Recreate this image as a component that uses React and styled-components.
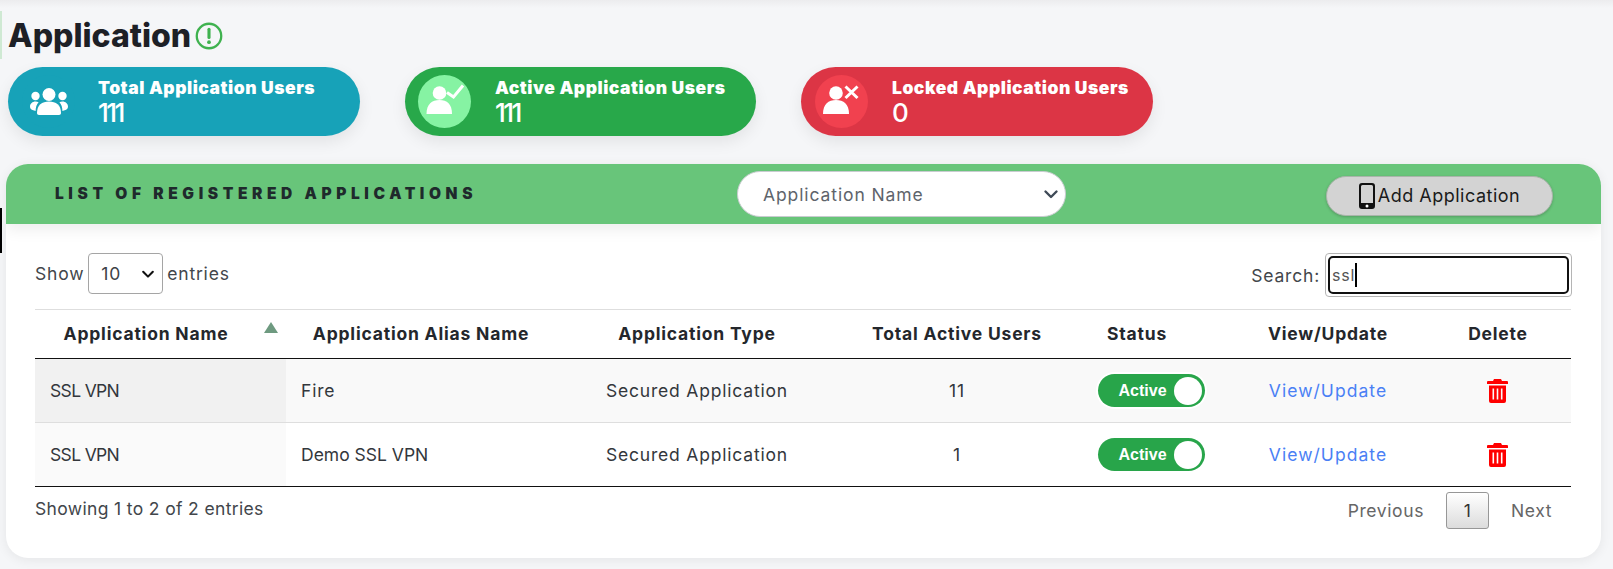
import React from "react";
import styled, { createGlobalStyle } from "styled-components";

const Global = createGlobalStyle`
  html, body { margin: 0; padding: 0; }
  body {
    background: #f5f6f8;
    font-family: "Inter", "Noto Sans", sans-serif;
    color: #212529;
  }
`;

const Page = styled.div`
  position: relative;
  width: 1613px;
  height: 569px;
  overflow: hidden;
  padding: 20px 12px 0 6px;
  box-sizing: border-box;
  background: linear-gradient(#ececee 0, #f5f6f8 8px);
  letter-spacing: 0.8px;
`;

const EdgeMark = styled.div`
  position: absolute;
  left: 0;
  width: 2px;
  top: ${(p) => p.$top}px;
  height: ${(p) => p.$h}px;
  background: ${(p) => p.$c};
`;

const TitleRow = styled.div`
  display: flex;
  align-items: center;
  gap: 4px;
  height: 32px;
  padding-left: 2px;
`;

const Title = styled.h1`
  margin: 0;
  font-size: 32px;
  line-height: 32px;
  font-weight: 800;
  color: #1d2026;
  letter-spacing: 0;
`;

const Stats = styled.div`
  display: flex;
  margin: 15px 0 0 2px;
  gap: 45px;
`;

const Pill = styled.div`
  width: ${(p) => p.$w}px;
  height: 69px;
  border-radius: 35px;
  background: ${(p) => p.$bg};
  box-shadow: 0 6px 16px rgba(0, 0, 0, 0.08);
  display: flex;
  align-items: center;
  color: #fff;
  padding-left: ${(p) => p.$pad}px;
  box-sizing: border-box;
`;

const PillIcon = styled.div`
  width: 53px;
  height: 53px;
  border-radius: 50%;
  background: ${(p) => p.$bg};
  display: flex;
  align-items: center;
  justify-content: center;
  flex: none;
`;

const PillText = styled.div`
  margin-left: ${(p) => p.$gap}px;
  display: flex;
  flex-direction: column;
`;

const PillLabel = styled.div`
  font-size: 17.5px;
  line-height: 22px;
  font-weight: 900;
  letter-spacing: 0.52px;
  white-space: nowrap;
`;

const PillValue = styled.div`
  font-size: 26px;
  line-height: 27px;
  font-weight: 500;
  letter-spacing: -2.5px;
`;

const Card = styled.section`
  margin-top: 28px;
  width: 1595px;
  height: 394px;
  background: #fff;
  border-radius: 22px;
  box-shadow: 0 2px 12px rgba(0, 0, 0, 0.07);
  overflow: hidden;
`;

const CardHeader = styled.header`
  height: 60px;
  background: #68c57a;
  display: flex;
  align-items: center;
  box-shadow: 0 6px 14px rgba(0, 0, 0, 0.07);
  position: relative;
`;

const CardTitle = styled.h2`
  margin: 0 0 1px 49px;
  width: 682px;
  flex: none;
  font-size: 15.5px;
  font-weight: 900;
  letter-spacing: 4.6px;
  color: #1f2a2c;
  white-space: nowrap;
`;

const NameSelect = styled.div`
  width: 329px;
  height: 46px;
  box-sizing: border-box;
  background: #fff;
  border: 1px solid #c9ccd0;
  border-radius: 23px;
  display: flex;
  align-items: center;
  justify-content: space-between;
  padding: 0 6px 0 25px;
  color: #5e646b;
  font-size: 17.5px;
  letter-spacing: 0.9px;
`;

const AddButton = styled.button`
  margin: 3px 0 0 260px;
  width: 227px;
  height: 40px;
  border-radius: 20px;
  border: 1px solid #a9b5aa;
  background: #d3d3d3;
  box-shadow: 0 1px 3px rgba(0, 0, 0, 0.2);
  display: flex;
  align-items: center;
  justify-content: center;
  gap: 3px;
  font: 400 18px "Inter", sans-serif;
  letter-spacing: 0.5px;
  color: #1a1a1a;
  padding: 0;
`;

const CardBody = styled.div`
  padding: 29px 29px 0 29px;
`;

const Controls = styled.div`
  display: flex;
  justify-content: space-between;
  align-items: flex-start;
  height: 44px;
  font-size: 17.5px;
  color: #42464b;
`;

const ControlGroup = styled.div`
  display: flex;
  align-items: center;
  gap: ${(p) => p.$gap}px;
`;

const EntrySelect = styled.div`
  width: 75px;
  height: 41px;
  box-sizing: border-box;
  border: 1px solid #a5a5a5;
  border-radius: 4px;
  display: flex;
  align-items: center;
  justify-content: space-between;
  padding: 0 7px 0 12px;
  color: #3d4146;
`;

const SearchBox = styled.div`
  width: 247px;
  height: 44px;
  box-sizing: border-box;
  border: 1px solid #b5b5b5;
  border-radius: 4px;
  padding: 2px;
`;

const SearchFocus = styled.div`
  height: 100%;
  box-sizing: border-box;
  border: 2.5px solid #111;
  border-radius: 5px;
  display: flex;
  align-items: center;
  padding-left: 2px;
  font-size: 16px;
  color: #555;
`;

const Caret = styled.span`
  display: inline-block;
  width: 2px;
  height: 24px;
  background: #000;
`;

const Table = styled.table`
  width: 1536px;
  margin-top: 12px;
  table-layout: fixed;
  border-collapse: collapse;
  border-top: 1px solid #dedede;
  border-bottom: 1.5px solid #111;
`;

const Th = styled.th`
  position: relative;
  height: 46px;
  padding: 0 ${(p) => p.$pr || 0}px 2px 0;
  text-align: center;
  font-size: 17.5px;
  font-weight: 700;
  color: #24272c;
  border-bottom: 1.5px solid #111;
  white-space: nowrap;
`;

const SortArrow = styled.span`
  position: absolute;
  left: 229px;
  top: 12px;
  width: 0;
  height: 0;
  border-left: 7.5px solid transparent;
  border-right: 7.5px solid transparent;
  border-top: 0;
  border-bottom: 11px solid #6e9a80;
`;

const Row = styled.tr`
  height: 64px;
  background: ${(p) => (p.$odd ? "#f9f9f9" : "#fff")};
  td {
    border-bottom: ${(p) => (p.$odd ? "1px solid #dedede" : "0")};
  }
`;

const Td = styled.td`
  padding: 0 ${(p) => p.$pr || 0}px 0 ${(p) => (p.$align === "center" ? 0 : 15)}px;
  text-align: ${(p) => p.$align || "left"};
  font-size: 17.5px;
  letter-spacing: ${(p) => (p.$ls !== undefined ? p.$ls : 0.8)}px;
  color: #33373c;
  background: ${(p) => p.$bg || "transparent"};
`;

const Toggle = styled.div`
  display: inline-flex;
  align-items: center;
  vertical-align: middle;
  box-sizing: border-box;
  width: 107px;
  height: 33px;
  border-radius: 17px;
  background: #28a54a;
  box-shadow: ${(p) => (p.$focus ? "0 0 0 2px #fff" : "none")};
  padding: 0 3px 0 21px;
  justify-content: space-between;
  color: #fff;
  font: 700 16px "Liberation Sans", Arial, sans-serif;
  letter-spacing: 0;
`;

const Knob = styled.span`
  width: 28px;
  height: 28px;
  border-radius: 50%;
  background: #fff;
  flex: none;
`;

const Link = styled.a`
  color: #4a80f5;
  text-decoration: none;
  letter-spacing: 1.05px;
`;

const Footer = styled.div`
  display: flex;
  justify-content: space-between;
  align-items: flex-start;
  margin-top: 5px;
  font-size: 17.5px;
  color: #42464b;
`;

const FooterInfo = styled.div`
  margin-top: 6px;
  letter-spacing: 0.35px;
`;

const Pager = styled.div`
  display: flex;
  align-items: center;
  height: 37px;
  color: #666;
  padding-right: 20px;
  letter-spacing: 0.6px;
`;

const PageLink = styled.span`
  margin: 0 ${(p) => p.$r}px 0 ${(p) => p.$l}px;
`;

const PageCurrent = styled.span`
  width: 43px;
  height: 37px;
  box-sizing: border-box;
  border: 1px solid #979797;
  border-radius: 3px;
  background: linear-gradient(#fff, #dcdcdc);
  display: flex;
  align-items: center;
  justify-content: center;
  color: #333;
`;

const Chevron = ({ color, w = 14 }) => (
  <svg width={w} height={w} viewBox="0 0 16 16" fill="none" stroke={color} strokeWidth="2.4" strokeLinecap="round" strokeLinejoin="round">
    <path d="M2.5 5.5 8 11l5.5-5.5" />
  </svg>
);

const UserCheck = () => (
  <svg width="53" height="53" viewBox="0 0 53 53" fill="#fff">
    <circle cx="21.5" cy="18" r="6.8" />
    <path d="M8.5 39c0-10 5.500-14 13-14s12.500 4 12.500 14Z" />
    <path d="M29 17.500l6.500 4.500L45 10.500" fill="none" stroke="#fff" strokeWidth="3" />
  </svg>
);

const UserCross = () => (
  <svg width="53" height="53" viewBox="0 0 53 53" fill="#fff">
    <circle cx="21" cy="18" r="6.8" />
    <path d="M8 39c0-10 5.500-14 13-14s13 4 13 14Z" />
    <path d="M30.500 11.500l12 11.500M42.500 11.500l-12 11.500" fill="none" stroke="#fff" strokeWidth="3" />
  </svg>
);

const Users = () => (
  <svg width="38" height="27" viewBox="0 0 38 27" fill="#fff">
    <circle cx="19" cy="6.500" r="6.500" />
    <circle cx="5.500" cy="8" r="4.200" />
    <circle cx="32.500" cy="8" r="4.200" />
    <path d="M7 25c0-8 5-11.500 12-11.500S31 17 31 25c0 1.200-.8 2-2 2H9c-1.200 0-2-.8-2-2Z" />
    <path d="M5.500 13.500c-3 0-5.500 2.300-5.500 5 0 2.200 1 2.800 2.500 3.400L5.600 23c0-3.500 1-6.500 3-8.700-.9-.5-2-.8-3.100-.8ZM32.500 13.500c3 0 5.500 2.300 5.500 5 0 2.200-1 2.800-2.500 3.400L32.400 23c0-3.500-1-6.500-3-8.700.9-.5 2-.8 3.100-.8Z" />
  </svg>
);

const Alert = () => (
  <svg width="28" height="28" viewBox="0 0 27 27" fill="none">
    <circle cx="13.500" cy="13.500" r="11.800" stroke="#3fb24f" strokeWidth="2.200" />
    <path d="M13.500 7v8" stroke="#3fb24f" strokeWidth="3" strokeLinecap="round" />
    <circle cx="13.500" cy="19.500" r="1.800" fill="#3fb24f" />
  </svg>
);

const Phone = () => (
  <svg width="16" height="26" viewBox="0 0 16 26">
    <path fillRule="evenodd" fill="#111" d="M3 0h10a3 3 0 0 1 3 3v20a3 3 0 0 1-3 3H3a3 3 0 0 1-3-3V3a3 3 0 0 1 3-3Zm-1 3.500V20h12V3.500a1.500 1.500 0 0 0-1.500-1.500h-9A1.500 1.500 0 0 0 2 3.500Z" />
    <circle cx="8" cy="23" r="1.500" fill="#fff" />
  </svg>
);

const Trash = () => (
  <svg width="21" height="24" viewBox="0 0 21 24" style={{ verticalAlign: "middle" }}>
    <path fill="#f00" d="M7 0h7l1 2h5a1 1 0 0 1 1 1v2H0V3a1 1 0 0 1 1-1h5Z" />
    <path fill="#f00" fillRule="evenodd" d="M2 6.500h17V22a2 2 0 0 1-2 2H4a2 2 0 0 1-2-2Zm3.500 3v11h1.600v-11Zm4.200 0v11h1.600v-11Zm4.200 0v11h1.600v-11Z" />
  </svg>
);

const rows = [
  { alias: "Fire", users: "11", odd: true, ls: 0.8 },
  { alias: "Demo SSL VPN", users: "1", odd: false, ls: 0 },
];

export default function App() {
  return (
    <Page>
      <Global />
      <EdgeMark $top={11} $h={48} $c="#cfe9d3" />
      <EdgeMark $top={208} $h={45} $c="#000" />
      <TitleRow>
        <Title>Application</Title>
        <Alert />
      </TitleRow>
      <Stats>
        <Pill $w={352} $bg="#17a2b8" $pad={14}>
          <PillIcon $bg="#17a2b8"><Users /></PillIcon>
          <PillText $gap={23}>
            <PillLabel>Total Application Users</PillLabel>
            <PillValue>111</PillValue>
          </PillText>
        </Pill>
        <Pill $w={351} $bg="#28a84a" $pad={13}>
          <PillIcon $bg="#86f3a3"><UserCheck /></PillIcon>
          <PillText $gap={24}>
            <PillLabel>Active Application Users</PillLabel>
            <PillValue>111</PillValue>
          </PillText>
        </Pill>
        <Pill $w={352} $bg="#dc3545" $pad={14}>
          <PillIcon $bg="#f1414f"><UserCross /></PillIcon>
          <PillText $gap={24}>
            <PillLabel>Locked Application Users</PillLabel>
            <PillValue>0</PillValue>
          </PillText>
        </Pill>
      </Stats>
      <Card>
        <CardHeader>
          <CardTitle>LIST OF REGISTERED APPLICATIONS</CardTitle>
          <NameSelect>
            Application Name
            <Chevron color="#3f4a57" w={16} />
          </NameSelect>
          <AddButton><Phone />Add Application</AddButton>
        </CardHeader>
        <CardBody>
          <Controls>
            <ControlGroup $gap={4}>
              Show
              <EntrySelect>10<Chevron color="#111" w={14} /></EntrySelect>
              entries
            </ControlGroup>
            <ControlGroup $gap={5}>
              Search:
              <SearchBox>
                <SearchFocus>ssl<Caret /></SearchFocus>
              </SearchBox>
            </ControlGroup>
          </Controls>
          <Table>
            <colgroup>
              <col style={{ width: 251 }} />
              <col style={{ width: 305 }} />
              <col style={{ width: 242 }} />
              <col style={{ width: 248 }} />
              <col style={{ width: 150 }} />
              <col style={{ width: 194 }} />
              <col style={{ width: 146 }} />
            </colgroup>
            <thead>
              <tr>
                <Th $pr={29}>Application Name<SortArrow /></Th>
                <Th $pr={35}>Application Alias Name</Th>
                <Th $pr={30}>Application Type</Th>
                <Th>Total Active Users</Th>
                <Th $pr={38}>Status</Th>
                <Th>View/Update</Th>
                <Th>Delete</Th>
              </tr>
            </thead>
            <tbody>
              {rows.map((r) => (
                <Row key={r.alias} $odd={r.odd}>
                  <Td $bg={r.odd ? "#f1f1f1" : "#fafafa"} $ls={-0.65}>SSL VPN</Td>
                  <Td $ls={r.ls}>{r.alias}</Td>
                  <Td>Secured Application</Td>
                  <Td $align="center">{r.users}</Td>
                  <Td $align="center" $pr={10}>
                    <Toggle $focus={r.odd}>Active<Knob /></Toggle>
                  </Td>
                  <Td $align="center"><Link href="#">View/Update</Link></Td>
                  <Td $align="center" $pr={2}><Trash /></Td>
                </Row>
              ))}
            </tbody>
          </Table>
          <Footer>
            <FooterInfo>Showing 1 to 2 of 2 entries</FooterInfo>
            <Pager>
              <PageLink $l={0} $r={22}>Previous</PageLink>
              <PageCurrent>1</PageCurrent>
              <PageLink $l={22} $r={0}>Next</PageLink>
            </Pager>
          </Footer>
        </CardBody>
      </Card>
    </Page>
  );
}
